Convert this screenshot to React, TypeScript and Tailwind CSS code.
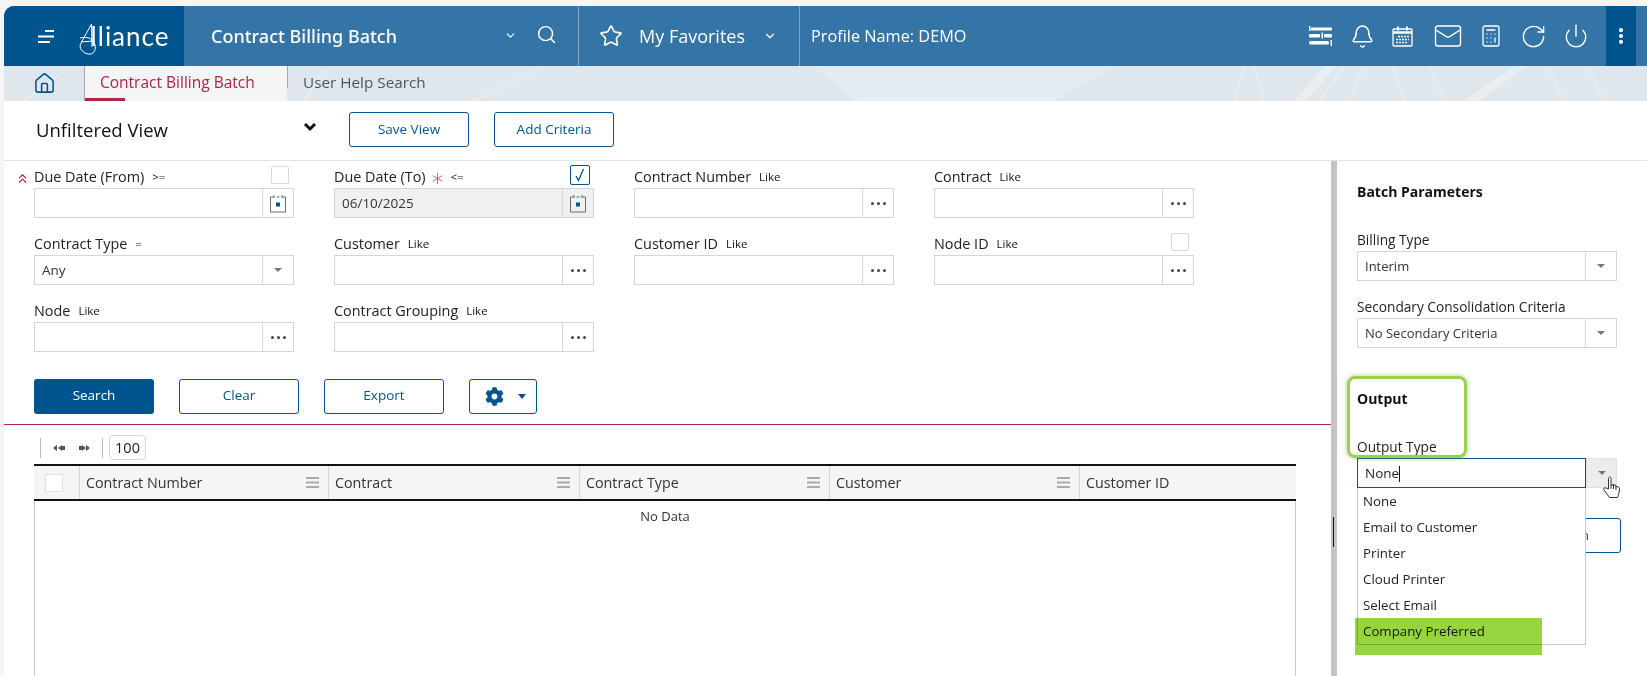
import { Bell, Calculator, ChevronDown, ChevronsUp, EllipsisVertical, House, Mail, Power, RotateCw, Search, Star } from "lucide-react";
import { FaCog } from "react-icons/fa";

type Field = {
  label: string;
  op: string;
  kind: "date" | "select" | "lookup";
  value?: string;
  required?: boolean;
  check?: "on" | "off";
  disabled?: boolean;
};

const FIELDS: Field[] = [
  { label: "Due Date (From)", op: ">=", kind: "date", check: "off" },
  { label: "Due Date (To)", op: "<=", kind: "date", value: "06/10/2025", required: true, check: "on", disabled: true },
  { label: "Contract Number", op: "Like", kind: "lookup" },
  { label: "Contract", op: "Like", kind: "lookup" },
  { label: "Contract Type", op: "=", kind: "select", value: "Any" },
  { label: "Customer", op: "Like", kind: "lookup" },
  { label: "Customer ID", op: "Like", kind: "lookup" },
  { label: "Node ID", op: "Like", kind: "lookup", check: "off" },
  { label: "Node", op: "Like", kind: "lookup" },
  { label: "Contract Grouping", op: "Like", kind: "lookup" },
];

const COLUMNS = [
  { name: "Contract Number", width: "w-[249px]" },
  { name: "Contract", width: "w-[251px]" },
  { name: "Contract Type", width: "w-[250px]" },
  { name: "Customer", width: "w-[250px]" },
  { name: "Customer ID", width: "flex-1" },
];

const OUTPUT_OPTIONS = ["None", "Email to Customer", "Printer", "Cloud Printer", "Select Email", "Company Preferred"];

const CalendarIcon = () => (
  <svg width="18" height="19" viewBox="0 0 18 19" fill="none" stroke="#5f6f7b" strokeWidth="1">
    <path d="M5 3H1.500v15h15V3H13M7.500 3h3M5 1v3M13 1v3" />
    <rect x="7" y="8.500" width="4" height="4" fill="#00558f" stroke="none" />
  </svg>
);

const Caret = () => <span className="block w-0 h-0 border-x-[4px] border-x-transparent border-t-[4px] border-t-[#777]" />;

const Dots = () => (
  <span className="flex gap-[3px]">
    <span className="w-[3px] h-[3px] rounded-full bg-[#444]" />
    <span className="w-[3px] h-[3px] rounded-full bg-[#444]" />
    <span className="w-[3px] h-[3px] rounded-full bg-[#444]" />
  </span>
);

const FilterField = ({ field }: { field: Field }) => (
  <div className="w-[260px] relative">
    <div className="h-[27px] pt-[5px] leading-[22px] text-[14.400px] text-[#222] flex items-center">
      <span>{field.label}</span>
      {field.required && (
        <svg className="ml-[6px] mt-[3px]" width="11" height="11" viewBox="0 0 11 11" stroke="#cf5f7a" strokeWidth="1">
          <path d="M5.500 0v11M0.700 2.700l9.600 5.600M10.300 2.700l-9.600 5.600" />
        </svg>
      )}
      <span className="ml-[8px] text-[11.500px] text-[#111]">{field.op}</span>
    </div>
    {field.check === "off" && (
      <span className="absolute right-[5px] top-[5px] w-[18px] h-[18px] border border-[#d8d8d8] rounded-[2px]" />
    )}
    {field.check === "on" && (
      <span className="absolute right-[4px] top-[4px] w-[20px] h-[20px] border-[1.500px] border-[#00558f] rounded-[2px] flex items-center justify-center">
        <svg width="12" height="14" viewBox="0 0 12 14" fill="none" stroke="#00558f" strokeWidth="1.300">
          <path d="M2 8l2.500 4.500L9.500 1" />
        </svg>
      </span>
    )}
    <div className={`h-[30px] border border-[#d6d6d6] flex ${field.disabled ? "bg-[#f0f0f0]" : "bg-white"}`}>
      <span className="flex-1 px-[7px] text-[13.500px] leading-[28px] text-[#333]">{field.value}</span>
      <span className="w-[31px] border-l border-[#d6d6d6] flex items-center justify-center">
        {field.kind === "date" && <CalendarIcon />}
        {field.kind === "select" && <Caret />}
        {field.kind === "lookup" && <Dots />}
      </span>
    </div>
  </div>
);

const OutlineButton = ({ children }: { children: React.ReactNode }) => (
  <button className="w-[120px] h-[35px] pb-[2px] rounded-[3px] border border-[#00558f] bg-white text-[13.500px] text-[#00558f]">
    {children}
  </button>
);

const SelectBox = ({ label, value }: { label: string; value: string }) => (
  <div>
    <div className="h-[22px] leading-[22px] text-[13.700px] text-[#222]">{label}</div>
    <div className="w-[260px] h-[30px] border border-[#d6d6d6] flex">
      <span className="flex-1 px-[7px] text-[13px] leading-[28px] text-[#333]">{value}</span>
      <span className="w-[31px] border-l border-[#d6d6d6] flex items-center justify-center">
        <Caret />
      </span>
    </div>
  </div>
);

const SlidersIcon = () => (
  <svg width="23" height="20" viewBox="0 0 23 20" fill="white">
    <rect x="0" y="0" width="1.500" height="5" />
    <rect x="2" y="1.500" width="21" height="3" rx="1" />
    <rect x="0" y="8" width="11" height="3.500" rx="1" />
    <rect x="12.500" y="6.500" width="1.500" height="6" />
    <rect x="15" y="8" width="8" height="3.500" rx="1" />
    <rect x="0" y="15" width="20" height="3.500" rx="1.500" />
    <rect x="21.500" y="14" width="1.500" height="6" />
  </svg>
);

const HeaderCalendar = () => (
  <svg width="21" height="21" viewBox="0 0 21 21" fill="none" stroke="white" strokeWidth="1.300">
    <rect x="1" y="3" width="19" height="17" rx="1" />
    <path d="M1 6.500h19" strokeWidth="2.500" />
    <path d="M6 0.500v4M15 0.500v4" strokeWidth="2" />
    <path d="M6 10.500h11M4 13.500h13M4 16.500h11" strokeWidth="1.600" strokeDasharray="2 1" />
  </svg>
);

const HandCursor = () => (
  <svg width="18" height="23" viewBox="0 0 18 23" fill="white" stroke="#333" strokeWidth="1">
    <path d="M5.500 13V2.500c0-2 2.500-2 2.500 0V9l2 .3V8.500l2.500.7v1l2.500.6c1 .3 1.500 1 1.500 2 0 3-1 6-2 8.700H6.500L1 14c-1-1.500.5-3 2-2z" />
    <path d="M8 9v4M10.500 9v4M13 10v4" fill="none" />
  </svg>
);

const Logo = () => (
  <div className="relative w-[96px] h-[40px] flex items-center">
    <svg className="absolute -left-[1px] top-[7px]" width="26" height="32" viewBox="0 0 26 32" fill="none" stroke="white" strokeWidth="1">
      <path d="M13.500 1 3 20C0 25 5 30 10 31c6 1 8-4 7-9-1-6-7-9-15-7" />
      <path d="M13.500 1 14 24M3 19l12-1" />
    </svg>
    <span className="whitespace-nowrap text-[26px] font-['Lato'] font-normal tracking-[1px] text-white">
      <span className="tracking-[-6px] text-transparent">A</span>lliance
    </span>
  </div>
);

const App = () => (
  <div className="w-[1647px] h-[676px] overflow-hidden bg-[#f5f5f5] pt-[6px] pl-[4px] font-['Open_Sans',sans-serif]">
    {/* top bar */}
    <header className="h-[60px] rounded-tl-[10px] overflow-hidden flex bg-[#3474a6] text-white">
      <div className="w-[180px] bg-[#00558f] flex items-center">
        <svg className="ml-[34px] mr-[24px]" width="17" height="13" viewBox="0 0 17 13" stroke="white" strokeWidth="2">
          <path d="M7 1h9M0 6.500h16M0 12h12" />
        </svg>
        <Logo />
      </div>
      <div className="w-[395px] flex items-center border-r border-[#7ea6c6] pl-[27px] relative">
        <span className="text-[18px] font-medium font-['Noto_Sans']">Contract Billing Batch</span>
        <ChevronDown className="absolute left-[320px] top-[23px]" size={13} strokeWidth={2} />
        <Search className="absolute left-[352px] top-[18px]" size={21} strokeWidth={1.7} />
      </div>
      <div className="w-[221px] flex items-center border-r border-[#7ea6c6] pl-[20px]">
        <Star size={24} strokeWidth={1.6} />
        <span className="ml-[16px] text-[18px] font-medium">My Favorites</span>
        <ChevronDown className="ml-[18px]" size={14} strokeWidth={2} />
      </div>
      <div className="flex-1 flex items-center pl-[11px] text-[16.300px] font-medium">Profile Name: DEMO</div>
      <div className="flex items-center w-[297px]">
        <SlidersIcon />
        <Bell className="ml-[18px]" size={25} strokeWidth={1.4} />
        <span className="ml-[17px]"><HeaderCalendar /></span>
        <Mail className="ml-[20px]" size={30} strokeWidth={1.1} />
        <Calculator className="ml-[16px]" size={24} strokeWidth={1.3} />
        <RotateCw className="ml-[17px]" size={27} strokeWidth={1.200} />
        <Power className="ml-[16px]" size={26} strokeWidth={1.300} />
      </div>
      <div className="w-[30px] bg-[#00558f] flex items-center justify-center">
        <EllipsisVertical size={20} strokeWidth={3} />
      </div>
      <div className="w-[11px]" />
    </header>

    {/* tab strip */}
    <nav className="relative h-[35px] bg-[#dfe6ec] flex overflow-hidden">
      <svg className="absolute inset-0" width="1643" height="35" fill="none" stroke="#e9eef2" strokeWidth="1.500">
        <path d="M20 35 65 2M300 35 320 2M470 35l70-35M1230 35 1240 0M1260 35 1250 0M1315 35 1340 0M1345 35 1360 0M1400 35l-12-35M1440 35l-14-35M1560 35l-16-35M1600 35l-16-35" />
        <path d="M1290 35 1320 0h12l-30 35zM1460 35l50-35h14l-50 35z" fill="#e9eef2" stroke="none" />
        <path d="M810 0h300l-60 35H850z" fill="#e3ecf2" stroke="none" />
      </svg>
      <div className="relative w-[80px] flex items-center pl-[29px] text-[#00558f]">
        <House size={23} strokeWidth={1.6} />
      </div>
      <div className="relative w-[203px] bg-[#f5f5f5] border-l border-[#a9a9a9] pl-[15px] text-[15.500px] leading-[33px] text-[#b32343]">
        Contract Billing Batch
        <span className="absolute left-0 bottom-0 w-[40px] h-[3px] bg-[#b32343]" />
      </div>
      <div className="relative border-l border-[#a9a9a9] h-[22px] pl-[15px] text-[15.300px] leading-[33px] text-[#4b5563]">User Help Search</div>
    </nav>

    {/* view bar */}
    <div className="h-[60px] bg-white border-b border-[#e4e4e4] flex items-center pb-[2px]">
      <span className="w-[345px] pl-[32px] text-[18.500px] text-[#111]">Unfiltered View</span>
      <svg className="-ml-[47px] mr-[31px] mb-[5px]" width="16" height="16" viewBox="0 0 16 16" fill="none" stroke="#111" strokeWidth="3">
        <path d="M3 5l5 5 5-5" />
      </svg>
      <button className="w-[120px] h-[35px] rounded-[3px] border border-[#00558f] text-[13.500px] text-[#00558f]">Save View</button>
      <button className="ml-[25px] w-[120px] h-[35px] rounded-[3px] border border-[#00558f] text-[13.500px] text-[#00558f]">Add Criteria</button>
    </div>

    <div className="h-[515px] flex">
      {/* filters and grid */}
      <section className="w-[1327px] bg-white">
        <div className="relative pl-[30px]">
          <ChevronsUp className="absolute left-[11px] top-[10px] text-[#c2274b]" size={15} strokeWidth={2} />
          <div className="grid grid-cols-[260px_260px_260px_260px] gap-x-[40px] gap-y-[10px]">
            {FIELDS.map((field) => (
              <FilterField key={field.label} field={field} />
            ))}
          </div>
          <div className="mt-[27px] flex gap-[25px]">
            <button className="w-[120px] h-[35px] pb-[2px] rounded-[3px] bg-[#00558f] text-[13.500px] text-white">Search</button>
            <OutlineButton>Clear</OutlineButton>
            <OutlineButton>Export</OutlineButton>
            <button className="w-[68px] h-[35px] rounded-[3px] border border-[#00558f] flex items-center pl-[15px] text-[#00558f]">
              <FaCog size={19} />
              <span className="ml-[14px] w-0 h-0 border-x-[4px] border-x-transparent border-t-[5px] border-t-[#00558f]" />
            </button>
          </div>
        </div>

        <div className="mt-[10px] border-t border-[#b32343] pl-[30px] pt-[10px]">
          <div className="h-[25px] flex items-center pl-[6px]">
            <span className="h-[20px] border-l border-[#bbb]" />
            <svg className="ml-[12px]" width="13" height="8" viewBox="0 0 13 8" fill="#555">
              <path d="M0 4l4-3v6zM5 4l4-3v6zM9 2h3v4H9z" />
            </svg>
            <svg className="ml-[12px]" width="13" height="8" viewBox="0 0 13 8" fill="#555">
              <path d="M1 2h3v4H1zM4 1l4 3-4 3zM8 1l4 3-4 3z" />
            </svg>
            <span className="ml-[11px] h-[20px] border-l border-[#bbb]" />
            <span className="ml-[6px] w-[37px] h-[25px] border border-[#d6d6d6] rounded-[4px] text-center text-[14.500px] leading-[23px] text-[#222]">100</span>
          </div>
          <div className="mt-[4px] w-[1262px] h-[300px] border-x border-[#c8c8c8]">
            <div className="h-[37px] -mx-px border-y-2 border-[#111] flex bg-[#f5f5f5]">
              <div className="w-[46px] border-r border-[#d6d6d6] flex items-center pl-[11px]">
                <span className="w-[18px] h-[18px] bg-white border border-[#e0e0e0]" />
              </div>
              {COLUMNS.map((col, i) => (
                <div key={col.name} className={`${col.width} ${i < 4 ? "border-r border-[#d6d6d6]" : ""} flex items-center justify-between pl-[6px] pr-[9px] text-[14.300px] text-[#333]`}>
                  <span>{col.name}</span>
                  {i < 4 && (
                    <svg width="13" height="13" viewBox="0 0 13 13" stroke="#aaa" strokeWidth="2">
                      <path d="M0 2h13M0 6.500h13M0 11h13" />
                    </svg>
                  )}
                </div>
              ))}
            </div>
            <div className="pt-[6px] text-center text-[13px] text-[#333]">No Data</div>
          </div>
        </div>
      </section>

      {/* splitter */}
      <div className="relative w-[6px] bg-[#c4c4c4]">
        <span className="absolute left-[2px] top-[356px] h-[30px] border-l border-[#111]" />
      </div>

      {/* batch parameters */}
      <aside className="relative flex-1 bg-white pl-[20px]">
        <div className="pt-[20px] h-[68px] text-[14px] font-bold text-[#111]">Batch Parameters</div>
        <SelectBox label="Billing Type" value="Interim" />
        <div className="mt-[15px]">
          <SelectBox label="Secondary Consolidation Criteria" value="No Secondary Criteria" />
        </div>
        <div className="mt-[40px] text-[14px] leading-[22px] font-bold text-[#111]">Output</div>
        <div className="mt-[26px] h-[22px] leading-[22px] text-[13.700px] text-[#222]">Output Type</div>
        <div className="flex w-[260px] h-[30px]">
          <span className="w-[229px] border border-[#00558f] px-[7px] text-[13.500px] leading-[28px] text-[#222]">
            None<span className="inline-block h-[16px] align-middle border-l border-[#111]" />
          </span>
          <span className="flex-1 bg-[#ececec] border border-[#e0e0e0] flex items-center justify-center"><Caret /></span>
        </div>
        <button className="mt-[30px] ml-[144px] w-[120px] h-[35px] rounded-[3px] border border-[#00558f] text-right pr-[31px] text-[13.500px] text-[#00558f]">Run</button>

        {/* open dropdown */}
        <ul className="absolute left-[20px] top-[327px] w-[229px] h-[157px] bg-white border border-[#c8c8c8] border-t-0">
          {OUTPUT_OPTIONS.map((option) => (
            <li key={option} className="h-[26px] pl-[5px] leading-[26px] text-[13.300px] text-[#222]">{option}</li>
          ))}
        </ul>

        {/* annotations from the screenshot */}
        <div className="absolute left-[18px] top-[457px] w-[187px] h-[37px] bg-[#97d53f] mix-blend-multiply" />
        <div className="absolute left-[10px] top-[215px] w-[120px] h-[82px] rounded-[8px] border-[3px] border-[#9ad04f] shadow-[0_0_5px_rgba(120,170,50,0.6)]" />
        <span className="absolute left-[266px] top-[315px]"><HandCursor /></span>
      </aside>
    </div>
  </div>
);

export default App;
